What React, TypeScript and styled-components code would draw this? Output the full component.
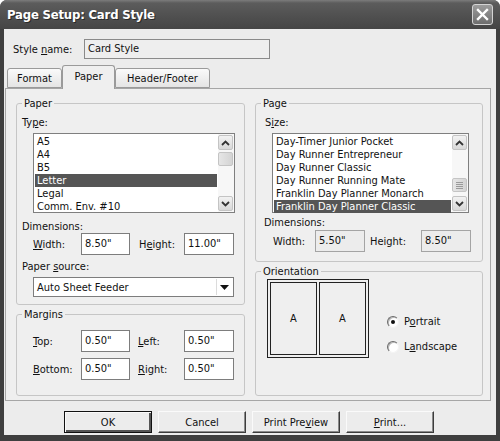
import React from 'react';
import styled, { createGlobalStyle } from 'styled-components';

const GlobalStyle = createGlobalStyle`
  html, body {
    margin: 0;
    padding: 0;
    background: #ffffff;
  }
  body {
    font-family: 'DejaVu Sans Condensed', 'Liberation Sans', sans-serif;
    font-size: 11px;
    color: #111;
  }
  * {
    box-sizing: border-box;
  }
`;

// 창 전체
const Window = styled.div`
  width: 500px;
  height: 441px;
  display: flex;
  flex-direction: column;
  background: #3f3f3f;
  border-radius: 7px 7px 0 0;
  overflow: hidden;
`;

const TitleBar = styled.div`
  height: 29px;
  flex: none;
  display: flex;
  align-items: center;
  justify-content: space-between;
  padding: 0 7px 0 7px;
  background: linear-gradient(#7c7c7c 0, #5c5c5c 3px, #505050 55%, #454545 100%);
`;

const Title = styled.span`
  color: #fff;
  font-weight: bold;
  font-size: 13px;
  letter-spacing: -0.2px;
  text-shadow: 1px 1px 0 #2a2a2a;
`;

const CloseButton = styled.div`
  width: 21px;
  height: 21px;
  border: 1px solid #d4d4d4;
  border-radius: 3px;
  background: linear-gradient(#9c9c9c, #6e6e6e);
  display: flex;
  align-items: center;
  justify-content: center;
`;

const Client = styled.div`
  flex: 1;
  margin: 0 4px 6px 4px;
  background: #ececec;
  display: flex;
  flex-direction: column;
`;

const StyleRow = styled.div`
  display: flex;
  align-items: center;
  margin-top: 10px;
  padding-left: 9px;
`;

const Label = styled.span<{ $w?: number }>`
  display: inline-block;
  width: ${(p) => (p.$w ? `${p.$w}px` : 'auto')};
  line-height: 13px;
  white-space: nowrap;
`;

const NameBox = styled.div`
  width: 186px;
  height: 20px;
  border: 1px solid #8a8a8a;
  background: #eeeeee;
  padding-left: 3px;
  line-height: 18px;
`;

// 탭
const TabRow = styled.div`
  display: flex;
  align-items: flex-end;
  height: 23px;
  margin-top: 6px;
  padding-left: 3px;
`;

const Tab = styled.div<{ $w: number; $active?: boolean }>`
  width: ${(p) => p.$w}px;
  height: ${(p) => (p.$active ? 24 : 20)}px;
  margin-bottom: ${(p) => (p.$active ? -1 : 0)}px;
  position: relative;
  z-index: ${(p) => (p.$active ? 1 : 0)};
  border: 1px solid #9a9a9a;
  border-bottom: ${(p) => (p.$active ? 'none' : '1px solid #9a9a9a')};
  border-radius: 3px 3px 0 0;
  background: ${(p) => (p.$active ? '#efefef' : 'linear-gradient(#fafafa, #e4e4e4)')};
  display: flex;
  align-items: center;
  justify-content: center;
  padding-bottom: ${(p) => (p.$active ? 3 : 0)}px;
`;

const Panel = styled.div`
  margin: 0 5px 0 1px;
  border: 1px solid #a6a6a6;
  background: #efefef;
  padding: 8px 7px 4px 10px;
  display: grid;
  grid-template-columns: 229px 228px;
  column-gap: 10px;
`;

const Column = styled.div`
  display: flex;
  flex-direction: column;
  gap: 3px;
`;

const Group = styled.fieldset<{ $pb: number }>`
  margin: 0;
  padding: 0 0 ${(p) => p.$pb}px 0;
  min-width: 0;
  border: 1px solid #c6c6c6;
  border-radius: 3px;
`;

const Legend = styled.legend`
  margin-left: 5px;
  padding: 0 2px;
  line-height: 13px;
`;

const FieldLabel = styled.div<{ $mt: number; $ml: number }>`
  margin: ${(p) => p.$mt}px 0 0 ${(p) => p.$ml}px;
  line-height: 13px;
`;

// 목록 상자
const ListBox = styled.div<{ $w: number; $ml: number }>`
  width: ${(p) => p.$w}px;
  height: 80px;
  margin: 4px 0 0 ${(p) => p.$ml}px;
  border: 1px solid #7f7f7f;
  background: #fff;
  display: flex;
`;

const Items = styled.div`
  flex: 1;
  padding: 1px 1px 0 1px;
`;

const Item = styled.div<{ $sel?: boolean }>`
  height: 13px;
  line-height: 13px;
  padding-left: 2px;
  white-space: nowrap;
  overflow: hidden;
  background: ${(p) => (p.$sel ? '#555555' : 'transparent')};
  color: ${(p) => (p.$sel ? '#fff' : '#111')};
`;

const ScrollBar = styled.div`
  width: 16px;
  padding: 1px 1px 1px 0;
  background: #f7f7f7;
  display: flex;
  flex-direction: column;
`;

const ScrollButton = styled.div`
  height: 15px;
  border: 1px solid #c4c4c4;
  border-radius: 2px;
  background: linear-gradient(#f2f2f2, #d8d8d8);
  display: flex;
  align-items: center;
  justify-content: center;
`;

const Track = styled.div`
  flex: 1;
`;

const Thumb = styled.div<{ $top: number }>`
  height: 14px;
  margin-top: ${(p) => p.$top}px;
  border: 1px solid #c4c4c4;
  border-radius: 2px;
  background: linear-gradient(90deg, #e6e6e6, #d4d4d4);
  display: flex;
  flex-direction: column;
  align-items: center;
  justify-content: center;
  gap: 1px;
`;

const Grip = styled.div`
  width: 7px;
  height: 1px;
  background: #9a9a9a;
`;

const DimRow = styled.div<{ $ml: number; $mt: number }>`
  display: flex;
  align-items: center;
  margin: ${(p) => p.$mt}px 0 0 ${(p) => p.$ml}px;
`;

const TextBox = styled.div<{ $w: number; $ro?: boolean }>`
  width: ${(p) => p.$w}px;
  height: 22px;
  border: 1px solid ${(p) => (p.$ro ? '#a4a4a4' : '#7d7d7d')};
  background: ${(p) => (p.$ro ? '#ececec' : '#fff')};
  padding-left: 3px;
  line-height: 20px;
`;

const Select = styled.div`
  width: 201px;
  height: 20px;
  margin: 4px 0 0 16px;
  border: 1px solid #7d7d7d;
  background: #fff;
  display: flex;
  align-items: center;
  padding-left: 3px;
`;

const SelectText = styled.span`
  flex: 1;
`;

const DropButton = styled.div`
  width: 16px;
  height: 16px;
  margin-right: 1px;
  border-left: 1px solid #dcdcdc;
  display: flex;
  align-items: center;
  justify-content: center;
`;

const MarginRow = styled.div<{ $mt: number }>`
  display: flex;
  align-items: center;
  margin: ${(p) => p.$mt}px 0 0 16px;
`;

// 방향
const OrientBody = styled.div`
  display: flex;
  align-items: flex-start;
  margin: 1px 0 0 11px;
`;

const Preview = styled.div`
  width: 102px;
  height: 79px;
  border: 1px solid #222;
  padding: 2px;
  display: flex;
  gap: 2px;
`;

const Sheet = styled.div`
  flex: 1;
  border: 1px solid #222;
  display: flex;
  align-items: center;
  justify-content: center;
`;

const Radios = styled.div`
  display: flex;
  flex-direction: column;
  gap: 12px;
  margin: 36px 0 0 18px;
`;

const RadioRow = styled.div`
  display: flex;
  align-items: center;
  gap: 5px;
  height: 13px;
`;

const RadioCircle = styled.div<{ $on?: boolean }>`
  width: 12px;
  height: 12px;
  border-radius: 50%;
  border: 1px solid;
  border-color: #6a6a6a #f4f4f4 #f4f4f4 #6a6a6a;
  background: #fff;
  box-shadow: inset 1px 1px 0 #b8b8b8;
  display: flex;
  align-items: center;
  justify-content: center;

  &::after {
    content: '';
    width: 4px;
    height: 4px;
    border-radius: 50%;
    background: ${(p) => (p.$on ? '#111' : 'transparent')};
  }
`;

const ButtonRow = styled.div`
  display: flex;
  gap: 6px;
  margin-top: 10px;
  padding-left: 60px;
`;

const Button = styled.div<{ $default?: boolean }>`
  width: 88px;
  height: 22px;
  background: #ececec;
  border: 1px solid;
  border-color: ${(p) => (p.$default ? '#111' : '#fafafa #3c3c3c #3c3c3c #fafafa')};
  box-shadow: ${(p) =>
    p.$default
      ? 'inset 1px 1px 0 #fafafa, inset -2px -2px 0 #555'
      : 'inset -1px -1px 0 #8a8a8a'};
  display: flex;
  align-items: center;
  justify-content: center;
`;

const Up = () => (
  <svg width="9" height="6" viewBox="0 0 9 6">
    <path d="M1 5 L4.5 1.5 L8 5" fill="none" stroke="#333" strokeWidth="1.8" />
  </svg>
);

const Down = () => (
  <svg width="9" height="6" viewBox="0 0 9 6">
    <path d="M1 1 L4.5 4.5 L8 1" fill="none" stroke="#333" strokeWidth="1.8" />
  </svg>
);

function List({ items, selected, w, ml, thumbTop, grip }: {
  items: string[];
  selected: number;
  w: number;
  ml: number;
  thumbTop: number;
  grip?: boolean;
}) {
  return (
    <ListBox $w={w} $ml={ml}>
      <Items>
        {items.map((it, i) => (
          <Item key={it} $sel={i === selected}>{it}</Item>
        ))}
      </Items>
      <ScrollBar>
        <ScrollButton><Up /></ScrollButton>
        <Track>
          <Thumb $top={thumbTop}>
            {grip && (
              <>
                <Grip />
                <Grip />
                <Grip />
                <Grip />
              </>
            )}
          </Thumb>
        </Track>
        <ScrollButton><Down /></ScrollButton>
      </ScrollBar>
    </ListBox>
  );
}

const paperTypes = ['A5', 'A4', 'B5', 'Letter', 'Legal', 'Comm. Env. #10'];
const pageSizes = [
  'Day-Timer Junior Pocket',
  'Day Runner Entrepreneur',
  'Day Runner Classic',
  'Day Runner Running Mate',
  'Franklin Day Planner Monarch',
  'Franklin Day Planner Classic',
];

export default function App() {
  return (
    <>
      <GlobalStyle />
      <Window>
        <TitleBar>
          <Title>Page Setup: Card Style</Title>
          <CloseButton>
            <svg width="13" height="13" viewBox="0 0 13 13">
              <path d="M2 2 L11 11 M11 2 L2 11" stroke="#fff" strokeWidth="2.4" strokeLinecap="square" />
            </svg>
          </CloseButton>
        </TitleBar>
        <Client>
          <StyleRow>
            <Label $w={71}>Style <u>n</u>ame:</Label>
            <NameBox>Card Style</NameBox>
          </StyleRow>

          <TabRow>
            <Tab $w={55}>Format</Tab>
            <Tab $w={53} $active>Paper</Tab>
            <Tab $w={95}>Header/Footer</Tab>
          </TabRow>

          <Panel>
            <Column>
              <Group $pb={7}>
                <Legend>Paper</Legend>
                <FieldLabel $mt={6} $ml={5}>Ty<u>p</u>e:</FieldLabel>
                <List items={paperTypes} selected={3} w={202} ml={16} thumbTop={2} />
                <FieldLabel $mt={7} $ml={5}>Dimensions:</FieldLabel>
                <DimRow $ml={16} $mt={0}>
                  <Label $w={48}><u>W</u>idth:</Label>
                  <TextBox $w={49}>8.50"</TextBox>
                  <Label $w={45} style={{ marginLeft: 9 }}>H<u>e</u>ight:</Label>
                  <TextBox $w={50}>11.00"</TextBox>
                </DimRow>
                <FieldLabel $mt={5} $ml={5}>Paper <u>s</u>ource:</FieldLabel>
                <Select>
                  <SelectText>Auto Sheet Feeder</SelectText>
                  <DropButton>
                    <svg width="9" height="5" viewBox="0 0 9 5">
                      <path d="M0 0 H9 L4.5 5 Z" fill="#111" />
                    </svg>
                  </DropButton>
                </Select>
              </Group>

              <Group $pb={15}>
                <Legend>Margins</Legend>
                <MarginRow $mt={9}>
                  <Label $w={48}><u>T</u>op:</Label>
                  <TextBox $w={49}>0.50"</TextBox>
                  <Label $w={46} style={{ marginLeft: 8 }}><u>L</u>eft:</Label>
                  <TextBox $w={50}>0.50"</TextBox>
                </MarginRow>
                <MarginRow $mt={6}>
                  <Label $w={48}><u>B</u>ottom:</Label>
                  <TextBox $w={49}>0.50"</TextBox>
                  <Label $w={46} style={{ marginLeft: 8 }}><u>R</u>ight:</Label>
                  <TextBox $w={50}>0.50"</TextBox>
                </MarginRow>
              </Group>
            </Column>

            <Column>
              <Group $pb={9}>
                <Legend>Page</Legend>
                <FieldLabel $mt={6} $ml={9}>S<u>i</u>ze:</FieldLabel>
                <List items={pageSizes} selected={5} w={197} ml={16} thumbTop={28} grip />
                <FieldLabel $mt={3} $ml={8}>Dimensions:</FieldLabel>
                <DimRow $ml={17} $mt={1}>
                  <Label $w={42}>Width:</Label>
                  <TextBox $w={50} $ro>5.50"</TextBox>
                  <Label $w={51} style={{ marginLeft: 5 }}>Height:</Label>
                  <TextBox $w={50} $ro>8.50"</TextBox>
                </DimRow>
              </Group>

              <Group $pb={37}>
                <Legend>Orientation</Legend>
                <OrientBody>
                  <Preview>
                    <Sheet>A</Sheet>
                    <Sheet>A</Sheet>
                  </Preview>
                  <Radios>
                    <RadioRow>
                      <RadioCircle $on />
                      <span>P<u>o</u>rtrait</span>
                    </RadioRow>
                    <RadioRow>
                      <RadioCircle />
                      <span>L<u>a</u>ndscape</span>
                    </RadioRow>
                  </Radios>
                </OrientBody>
              </Group>
            </Column>
          </Panel>

          <ButtonRow>
            <Button $default>OK</Button>
            <Button>Cancel</Button>
            <Button>Print Pre<u>v</u>iew</Button>
            <Button><u>P</u>rint...</Button>
          </ButtonRow>
        </Client>
      </Window>
    </>
  );
}
